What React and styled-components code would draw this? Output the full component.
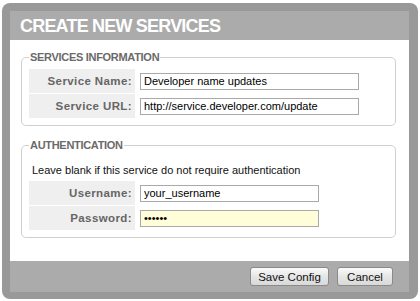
import React from 'react';
import styled, { createGlobalStyle } from 'styled-components';

const GlobalStyle = createGlobalStyle`
  * { box-sizing: border-box; }
  body {
    margin: 0;
    background: #fff;
    font-family: "Liberation Sans", Arial, sans-serif;
  }
`;

const Frame = styled.div`
  width: 416px;
  height: 296px;
  margin: 3px 0 0 2px;
  padding: 8px 9px 7px 8px;
  background: #999999;
  border-radius: 8px;
`;

const Dialog = styled.div`
  height: 100%;
  display: flex;
  flex-direction: column;
`;

const Header = styled.div`
  height: 29px;
  background: #ababab;
  color: #fff;
  font-weight: bold;
  font-size: 18px;
  line-height: 30px;
  padding-left: 10px;
  letter-spacing: -0.8px;
`;

const Body = styled.div`
  flex: 1;
  background: #fff;
  padding: 11px 13px 0 11px;
  display: flex;
  flex-direction: column;
  gap: 13px;
`;

const Group = styled.fieldset`
  margin: 0;
  border: 1px solid #cfcfcf;
  border-radius: 5px;
  padding: 6px 8px 7px 7px;
  display: flex;
  flex-direction: column;
  gap: 1px;
`;

const Legend = styled.legend`
  font-size: 11px;
  font-weight: bold;
  color: #6a6a6a;
  padding: 0 1px;
  margin-left: 0;
  letter-spacing: -0.3px;
`;

const Note = styled.div`
  font-size: 11px;
  color: #111;
  padding: 7px 0 3px 3px;
  line-height: 13px;
`;

const Row = styled.div`
  display: flex;
  align-items: center;
  gap: 5px;
`;

const Label = styled.div`
  width: 106px;
  height: 24px;
  background: #efefef;
  text-align: right;
  padding-right: 3px;
  font-size: 11.5px;
  font-weight: bold;
  color: #666;
  line-height: 24px;
  letter-spacing: 0.4px;
`;

const Input = styled.input`
  width: ${p => p.$w}px;
  height: 17px;
  border: 1px solid #a9a9a9;
  background: ${p => (p.$highlight ? '#fffed8' : '#fff')};
  font-family: "Liberation Sans", Arial, sans-serif;
  font-size: 11px;
  color: #000;
  padding: 0 3px;
  outline: none;
`;

const Footer = styled.div`
  height: 31px;
  background: #ababab;
  display: flex;
  justify-content: flex-end;
  align-items: center;
  gap: 8px;
  padding: 0 16px 0 0;
`;

const Button = styled.button`
  height: 19px;
  width: ${p => p.$w}px;
  border: 1px solid #8a8a8a;
  border-radius: 3px;
  background: linear-gradient(#fbfbfb, #e6e6e6 50%, #d9d9d9);
  font-family: "Liberation Sans", Arial, sans-serif;
  font-size: 11.5px;
  color: #111;
  padding: 0;
`;

export default function App() {
  return (
    <>
      <GlobalStyle />
      <Frame>
        <Dialog>
          <Header>CREATE NEW SERVICES</Header>
          <Body>
            <Group>
              <Legend>SERVICES INFORMATION</Legend>
              <Row>
                <Label>Service Name:</Label>
                <Input $w={219} defaultValue="Developer name updates" />
              </Row>
              <Row>
                <Label>Service URL:</Label>
                <Input $w={219} defaultValue="http://service.developer.com/update" />
              </Row>
            </Group>
            <Group>
              <Legend>AUTHENTICATION</Legend>
              <Note>Leave blank if this service do not require authentication</Note>
              <Row>
                <Label>Username:</Label>
                <Input $w={179} defaultValue="your_username" />
              </Row>
              <Row>
                <Label>Password:</Label>
                <Input $w={179} $highlight type="password" defaultValue="secret" />
              </Row>
            </Group>
          </Body>
          <Footer>
            <Button $w={79}>Save Config</Button>
            <Button $w={56}>Cancel</Button>
          </Footer>
        </Dialog>
      </Frame>
    </>
  );
}
